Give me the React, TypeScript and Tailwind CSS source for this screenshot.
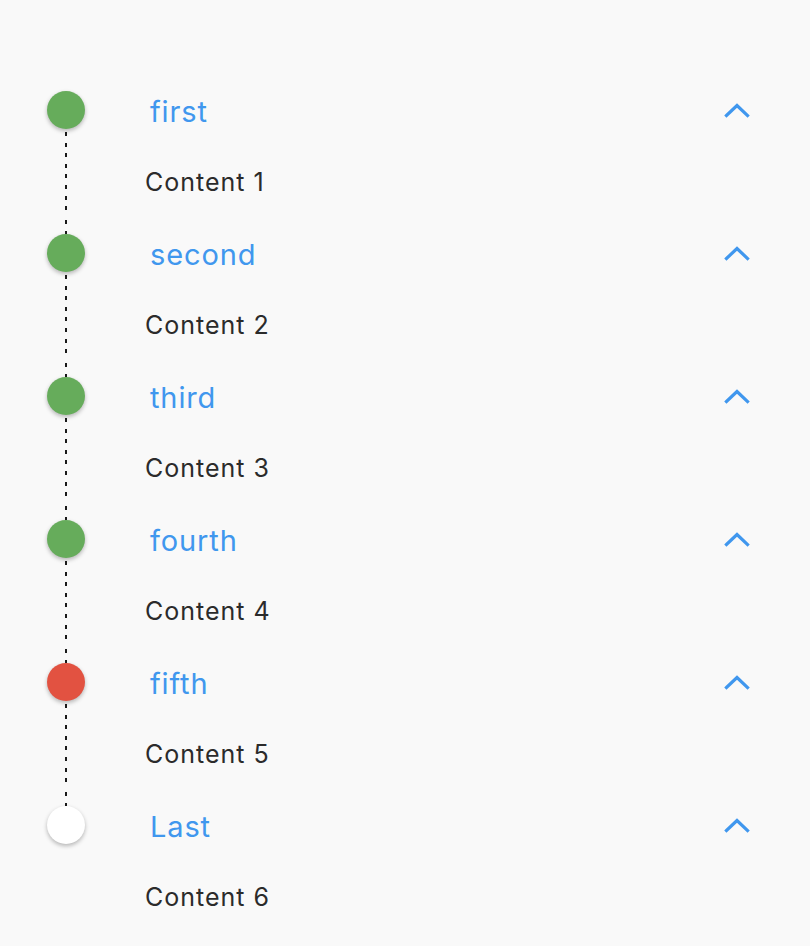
import React from "react";

type Item = { title: string; content: string; color: "green" | "red" | "white" };

const items: Item[] = [
  { title: "first", content: "Content 1", color: "green" },
  { title: "second", content: "Content 2", color: "green" },
  { title: "third", content: "Content 3", color: "green" },
  { title: "fourth", content: "Content 4", color: "green" },
  { title: "fifth", content: "Content 5", color: "red" },
  { title: "Last", content: "Content 6", color: "white" },
];

const dotClass: Record<Item["color"], string> = {
  green: "bg-[#66ac5b]",
  red: "bg-[#e25241]",
  white: "bg-white",
};

function Chevron() {
  return (
    <svg width="26" height="16" viewBox="0 0 26 16" fill="none">
      <path d="M2.5 13.5 L13 3.5 L23.5 13.5" stroke="#4097ee" strokeWidth="3.2" strokeLinecap="square" strokeLinejoin="miter" />
    </svg>
  );
}

const dashed =
  "w-[2px] bg-[repeating-linear-gradient(to_bottom,transparent_0px,transparent_3px,#1a1a1a_3px,#1a1a1a_7px,transparent_7px,transparent_10.6px)]";

export default function App() {
  return (
    <div
      className="w-[810px] h-[946px] bg-[#f9f9f9] pt-[74px] overflow-hidden"
      style={{ fontFamily: "Inter, 'Noto Sans', sans-serif" }}
    >
      {items.map((it, i) => (
        <div key={it.title} className="flex h-[143px]">
          <div className="ml-[47px] w-[38px] flex flex-col items-center">
            <div className={`h-[17px] ${i === 0 ? "" : dashed}`} />
            <div
              className={`w-[38px] h-[38px] rounded-full shrink-0 ${dotClass[it.color]} shadow-[0_2px_4px_rgba(0,0,0,0.28)]`}
            />
            <div className={`flex-1 ${i === items.length - 1 ? "" : dashed}`} />
          </div>
          <div className="flex-1 flex flex-col">
            <div className="h-[72px] flex items-center pr-[60px]">
              <span className="ml-[65px] pt-[2px] text-[29px] leading-none tracking-[0.03em] text-[#4097ee] flex-1">
                {it.title}
              </span>
              <Chevron />
            </div>
            <div className="h-[71px] flex items-center">
              <span className="ml-[60px] pt-[1px] text-[25px] leading-none tracking-[0.04em] text-[#2b2b2b]">
                {it.content}
              </span>
            </div>
          </div>
        </div>
      ))}
    </div>
  );
}
